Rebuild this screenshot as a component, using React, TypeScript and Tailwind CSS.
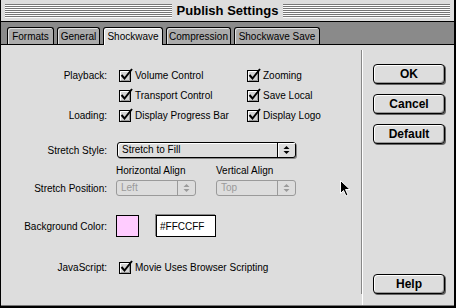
import React from "react";

function Stripes() {
  return (
    <div className="flex-1 flex flex-col">
      {[0, 1, 2, 3, 4, 5, 6].map((i) => (
        <div key={i} className="h-px bg-[#777] border-b border-white box-content" />
      ))}
    </div>
  );
}

function Check() {
  return (
    <svg width="15" height="14" viewBox="0 0 15 14" className="shrink-0">
      <rect x="0.5" y="2.5" width="11" height="11" fill="#d4d4d4" stroke="#000" />
      <path d="M1.5 12 V3.5 H10.5" stroke="#fff" fill="none" />
      <path d="M2 12.5 H10.5 V4" stroke="#999" fill="none" />
      <path d="M2.5 7 L5.5 10.5 L13 1" stroke="#000" strokeWidth="2" fill="none" />
    </svg>
  );
}

function CheckItem({ label, w = "" }: { label: string; w?: string }) {
  return (
    <div className={`flex items-center gap-px ${w}`}>
      <Check />
      <span>{label}</span>
    </div>
  );
}

function Arrows({ color }: { color: string }) {
  return (
    <svg width="7" height="10" viewBox="0 0 7 10">
      <polygon points="0.5,4 3.5,1 6.5,4" fill={color} />
      <polygon points="0.5,6 3.5,9 6.5,6" fill={color} />
    </svg>
  );
}

function Popup({ label, disabled, w }: { label: string; disabled?: boolean; w: string }) {
  return (
    <div
      className={`flex h-[16px] ${w} rounded-[3px] border bg-[#dddddd] ${
        disabled ? "border-[#9a9a9a] text-[#9a9a9a]" : "border-black text-black shadow-[inset_1px_1px_0_#fff,1px_1px_0_#888]"
      }`}
    >
      <span className="flex-1 pl-[4px] leading-[14px]">{label}</span>
      <span
        className={`w-[18px] flex items-center justify-center border-l ${
          disabled ? "border-[#9a9a9a]" : "border-black shadow-[inset_1px_1px_0_#fff]"
        }`}
      >
        <Arrows color={disabled ? "#9a9a9a" : "#000"} />
      </span>
    </div>
  );
}

function Btn({ children, className = "" }: { children: React.ReactNode; className?: string }) {
  return (
    <div
      className={`w-[72px] h-[20px] rounded-[4px] border border-black bg-[#dddddd] shadow-[inset_1px_1px_0_#fff,inset_-1px_-1px_0_#999,1px_1px_0_#666] flex items-center justify-center font-bold text-[12px] ${className}`}
    >
      {children}
    </div>
  );
}

const tabs = [
  { name: "Formats", w: "w-[47px]" },
  { name: "General", w: "w-[43px]" },
  { name: "Shockwave", w: "w-[60px]", active: true },
  { name: "Compression", w: "w-[65px]" },
  { name: "Shockwave Save", w: "w-[86px]" },
];

export default function App() {
  return (
    <div className="relative w-[456px] h-[308px] flex flex-col bg-[#dddddd] border-l border-r-2 border-black font-['Liberation_Sans',Arial,sans-serif] text-[10px] text-black">
      {/* title bar */}
      <div className="h-[22px] flex items-center px-[4px] border-b border-black">
        <Stripes />
        <div className="px-[5px] font-bold text-[13px] leading-none">Publish Settings</div>
        <Stripes />
      </div>

      {/* tabs */}
      <div className="h-[23px] flex items-end gap-[3px] pl-[6px] bg-[#8a8a8a] border-b border-black">
        {tabs.map((t) =>
          t.active ? (
            <div
              key={t.name}
              className={`${t.w} h-[18px] -mb-px relative flex items-center justify-center rounded-t-[3px] border border-b-0 border-black bg-[#dddddd] shadow-[inset_1px_1px_0_#fff]`}
            >
              {t.name}
            </div>
          ) : (
            <div
              key={t.name}
              className={`${t.w} h-[17px] flex items-center justify-center rounded-t-[3px] border border-b-0 border-black bg-[#ababab] shadow-[inset_1px_1px_0_#e0e0e0]`}
            >
              {t.name}
            </div>
          )
        )}
      </div>

      {/* content */}
      <div className="flex-1 flex">
        <div className="w-[360px] flex flex-col pt-[20px]">
          <div className="flex items-center h-[20px]">
            <div className="w-[106px] text-right">Playback:</div>
            <div className="ml-[12px] flex">
              <CheckItem label="Volume Control" w="w-[128px]" />
              <CheckItem label="Zooming" />
            </div>
          </div>
          <div className="flex items-center h-[20px]">
            <div className="w-[106px]" />
            <div className="ml-[12px] flex">
              <CheckItem label="Transport Control" w="w-[128px]" />
              <CheckItem label="Save Local" />
            </div>
          </div>
          <div className="flex items-center h-[20px]">
            <div className="w-[106px] text-right">Loading:</div>
            <div className="ml-[12px] flex">
              <CheckItem label="Display Progress Bar" w="w-[128px]" />
              <CheckItem label="Display Logo" />
            </div>
          </div>

          <div className="flex items-center mt-[17px]">
            <div className="w-[106px] text-right">Stretch Style:</div>
            <div className="ml-[10px]">
              <Popup label="Stretch to Fill" w="w-[179px]" />
            </div>
          </div>

          <div className="flex items-center h-[12px] mt-[6px]">
            <div className="w-[106px]" />
            <div className="ml-[9px] w-[100px]">Horizontal Align</div>
            <div>Vertical Align</div>
          </div>

          <div className="flex items-center mt-[4px]">
            <div className="w-[106px] text-right">Stretch Position:</div>
            <div className="ml-[9px] flex gap-[20px]">
              <Popup label="Left" disabled w="w-[80px]" />
              <Popup label="Top" disabled w="w-[80px]" />
            </div>
          </div>

          <div className="flex items-center mt-[19px]">
            <div className="w-[106px] text-right">Background Color:</div>
            <div className="ml-[9px] w-[23px] h-[22px] bg-[#ffccff] border border-black" />
            <div className="ml-[17px] w-[60px] h-[22px] bg-white border border-black shadow-[-1px_-1px_0_#888] flex items-center pl-[3px]">
              #FFCCFF
            </div>
          </div>

          <div className="flex items-center h-[20px] mt-[20px]">
            <div className="w-[106px] text-right">JavaScript:</div>
            <div className="ml-[12px]">
              <CheckItem label="Movie Uses Browser Scripting" />
            </div>
          </div>
        </div>

        <div className="w-px bg-[#888] mt-[5px] mb-[11px]" />
        <div className="flex-1 flex flex-col pl-[10px] pt-[19px] pb-[11px] border-l border-white mt-[5px]">
          <div className="-mt-[5px] flex flex-col gap-[10px]">
            <Btn>OK</Btn>
            <Btn>Cancel</Btn>
            <Btn>Default</Btn>
          </div>
          <Btn className="mt-auto">Help</Btn>
        </div>
      </div>

      <div className="h-[3px] bg-black border-t border-[#777]" />

      {/* mouse cursor */}
      <svg className="absolute left-[339px] top-[180px]" width="11" height="17" viewBox="0 0 11 17">
        <path d="M0.5 0.5 V13.5 L3.5 10.5 L6 16 L8 15 L5.5 9.5 H10 Z" fill="#000" stroke="#fff" strokeWidth="1" />
      </svg>
    </div>
  );
}
